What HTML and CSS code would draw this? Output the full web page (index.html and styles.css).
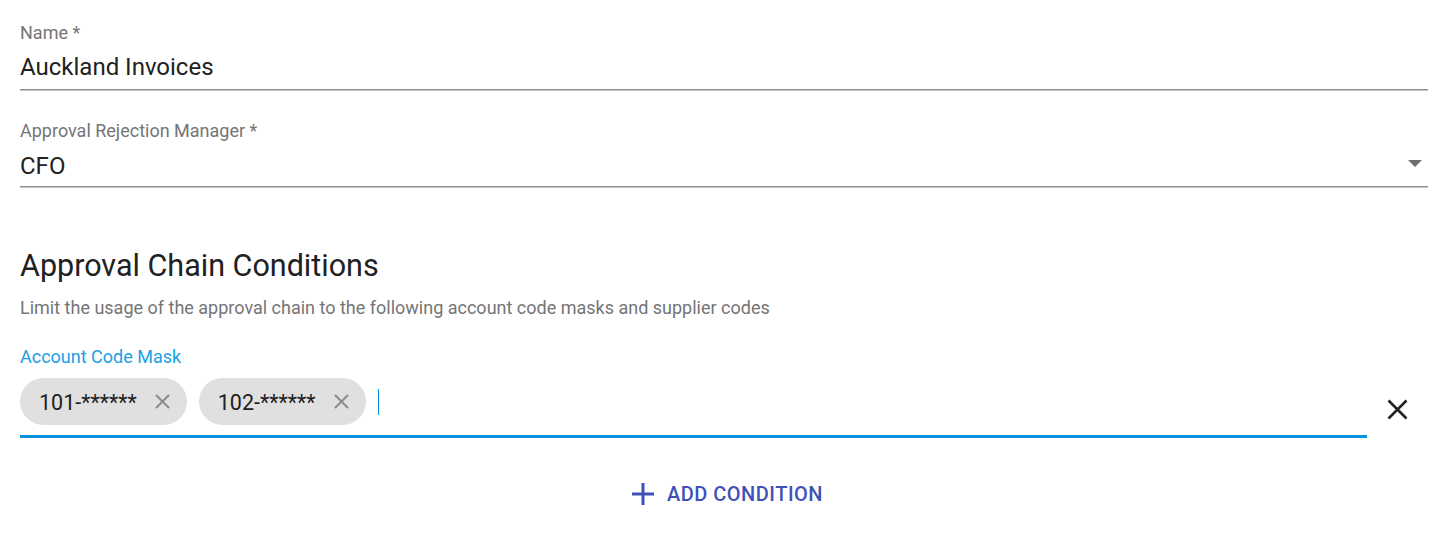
FILE: index.html
```html
<!DOCTYPE html>
<html lang="en">
<head>
<meta charset="utf-8">
<title>Approval Chain</title>
<link rel="stylesheet" href="styles.css">
</head>
<body>
<div class="form">
  <div class="field field-first">
    <div class="label">Name *</div>
    <div class="control">
      <span class="value">Auckland Invoices</span>
    </div>
  </div>
  <div class="field">
    <div class="label">Approval Rejection Manager *</div>
    <div class="control">
      <span class="value">CFO</span>
      <svg class="arrow" width="14" height="7" viewBox="0 0 14 7"><polygon points="0,0 14,0 7,7" fill="#6e6e6e"/></svg>
    </div>
  </div>

  <h2 class="heading">Approval Chain Conditions</h2>
  <p class="desc">Limit the usage of the approval chain to the following account code masks and supplier codes</p>

  <div class="condition">
    <div class="auto">
      <div class="label label-focused">Account Code Mask</div>
      <div class="chips">
        <span class="chip"><span class="chip-text">101-******</span><svg class="chip-del" width="15" height="15" viewBox="0 0 15 15"><path d="M1 1L14 14M14 1L1 14" stroke="#8c8c8c" stroke-width="2" fill="none"/></svg></span>
        <span class="chip"><span class="chip-text">102-******</span><svg class="chip-del" width="15" height="15" viewBox="0 0 15 15"><path d="M1 1L14 14M14 1L1 14" stroke="#8c8c8c" stroke-width="2" fill="none"/></svg></span>
        <span class="caret"></span>
      </div>
      <div class="focus-line"></div>
    </div>
    <div class="clear">
      <svg width="21" height="21" viewBox="0 0 21 21"><path d="M1.5 1.5L19.5 19.5M19.5 1.5L1.5 19.5" stroke="#222" stroke-width="2.6" fill="none"/></svg>
    </div>
  </div>

  <div class="actions">
    <button class="add-btn" type="button">
      <svg width="22" height="22" viewBox="0 0 22 22"><path d="M11 0V22M0 11H22" stroke="#3f51b5" stroke-width="3" fill="none"/></svg>
      <span>Add Condition</span>
    </button>
  </div>
</div>
</body>
</html>
```

FILE: styles.css
```css
* { box-sizing: border-box; }

html, body {
  margin: 0;
  padding: 0;
  background: #ffffff;
}

body {
  font-family: Roboto, "Liberation Sans", Arial, sans-serif;
  color: #212121;
}

.form {
  padding: 0 16px 0 20px;
}

.field {
  margin-top: 30px;
}

.field-first {
  margin-top: 22px;
}

.label {
  font-size: 18px;
  line-height: 22px;
  color: #757575;
}

.label-focused {
  color: #1a9fe6;
}

.control {
  display: flex;
  align-items: flex-start;
  margin-top: 9px;
  padding-bottom: 8px;
  border-bottom: 1px solid #8e8e8e;
  box-shadow: 0 1px 0 #c6c6c6;
  margin-bottom: 1px;
}

.field:not(.field-first) .control {
  margin-top: 10px;
  padding-bottom: 6px;
}

.value {
  flex: 1;
  font-size: 24px;
  line-height: 28px;
  color: #212121;
}

.arrow {
  margin-top: 8px;
  margin-right: 6px;
}

.heading {
  margin: 61px 0 0;
  font-size: 30.5px;
  line-height: 36px;
  font-weight: 400;
  color: #212121;
}

.desc {
  margin: 13px 0 0;
  font-size: 18px;
  line-height: 22px;
  color: #757575;
}

.condition {
  display: flex;
  align-items: flex-end;
  margin-top: 27px;
}

.auto {
  flex: 1;
}

.chips {
  display: flex;
  align-items: center;
  gap: 12px;
  margin-top: 10px;
}

.chip {
  display: inline-flex;
  align-items: center;
  gap: 18px;
  height: 47px;
  padding: 0 17px 0 19px;
  border-radius: 24px;
  background: #e0e0e0;
}

.chip-text {
  font-size: 21.5px;
  line-height: 24px;
  color: #212121;
  padding-top: 2px;
}

.chip-del {
  display: block;
}

.caret {
  width: 1px;
  height: 26px;
  background: #0a84d6;
}

.focus-line {
  margin-top: 10px;
  height: 3px;
  background: #0b93de;
}

.clear {
  width: 61px;
  display: flex;
  justify-content: center;
  margin-bottom: 18px;
}

.clear svg {
  display: block;
}

.actions {
  display: flex;
  justify-content: center;
  margin-top: 44px;
  padding-left: 7px;
}

.add-btn {
  display: inline-flex;
  align-items: center;
  gap: 13px;
  padding: 0;
  border: 0;
  background: transparent;
  font-family: Roboto, "Liberation Sans", Arial, sans-serif;
  font-size: 20px;
  line-height: 24px;
  font-weight: 500;
  letter-spacing: 0.5px;
  text-transform: uppercase;
  color: #3f51b5;
}

.add-btn svg {
  display: block;
}
```
